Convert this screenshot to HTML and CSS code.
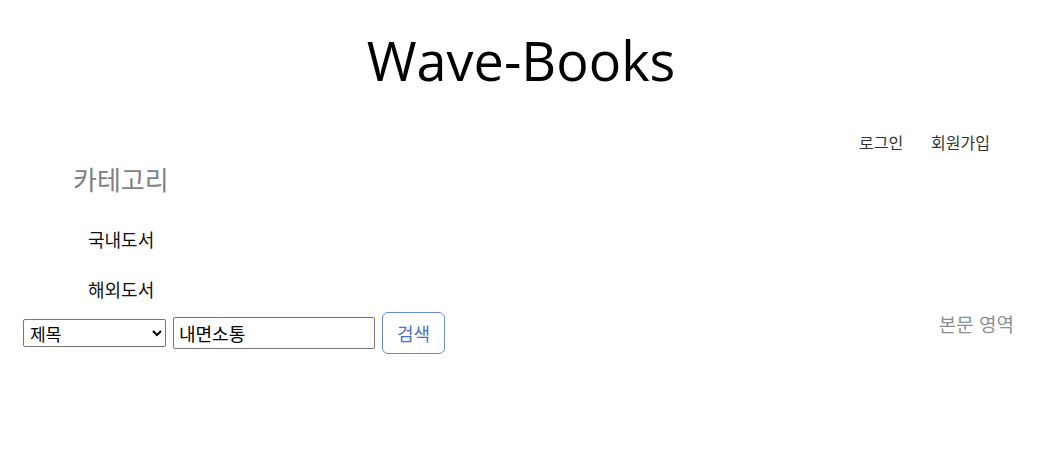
FILE: index.html
```html
<!DOCTYPE html>
<html lang="ko">
<head>
<meta charset="utf-8">
<title>Wave-Books</title>
<link rel="stylesheet" href="styles.css">
</head>
<body>
<header class="header">
  <h1 class="logo">Wave-Books</h1>
  <nav class="auth">
    <a href="#" class="auth-link">로그인</a>
    <a href="#" class="auth-link">회원가입</a>
  </nav>
</header>
<aside class="category">
  <h2 class="category-title">카테고리</h2>
  <ul class="category-list">
    <li>국내도서</li>
    <li>해외도서</li>
  </ul>
</aside>
<section class="main-row">
  <form class="search">
    <select class="search-select">
      <option>제목</option>
    </select>
    <input class="search-input" type="text" value="내면소통">
    <button class="search-btn" type="button">검색</button>
  </form>
  <div class="content">본문 영역</div>
</section>
</body>
</html>
```
FILE: styles.css
```css
html, body {
  margin: 0;
  padding: 0;
  background: #fff;
}
body {
  font-family: "Open Sans", "Noto Sans CJK KR", sans-serif;
  color: #212529;
}
.header {
  display: flex;
  flex-direction: column;
}
.logo {
  margin: 22px 0 0;
  text-align: center;
  font-weight: 400;
  font-size: 54px;
  line-height: 76px;
  color: #000;
}
.auth {
  display: flex;
  justify-content: flex-end;
  gap: 28px;
  padding-right: 52px;
  margin-top: 33px;
}
.auth-link {
  font-family: "Noto Sans CJK KR", sans-serif;
  font-size: 16px;
  color: #333;
  text-decoration: none;
  line-height: 22px;
}
.category {
  padding-left: 73px;
}
.category-title {
  margin: 9px 0 0;
  font-family: "Noto Sans CJK KR", sans-serif;
  font-weight: 400;
  font-size: 26px;
  line-height: 34px;
  color: #7f7f84;
}
.category-list {
  list-style: none;
  margin: 31px 0 0;
  padding: 0 0 0 15px;
  font-family: "Noto Sans CJK KR", sans-serif;
  font-size: 18px;
  line-height: 24px;
  color: #111;
  display: flex;
  flex-direction: column;
  gap: 26px;
}
.main-row {
  display: flex;
  justify-content: space-between;
  align-items: flex-start;
  padding: 11px 28px 0 23px;
}
.search {
  display: flex;
  align-items: center;
  gap: 7px;
}
.search-select {
  width: 143px;
  height: 28px;
  font-family: "Noto Sans CJK KR", sans-serif;
  font-size: 17px;
  border: 1px solid #767676;
  border-radius: 2px;
  background: #fff;
  color: #000;
  padding: 0 2px;
}
.search-input {
  width: 202px;
  height: 32px;
  box-sizing: border-box;
  font-family: "Noto Sans CJK KR", sans-serif;
  font-size: 18px;
  border: 1px solid #767676;
  border-radius: 2px;
  padding: 0 5px;
  color: #000;
}
.search-btn {
  width: 63px;
  height: 42px;
  font-family: "Noto Sans CJK KR", sans-serif;
  font-size: 18px;
  color: #4a6fcf;
  background: #fff;
  border: 1px solid #6a86d6;
  border-radius: 6px;
}
.content {
  font-family: "Noto Sans CJK KR", sans-serif;
  font-size: 19px;
  line-height: 24px;
  color: #8a8f98;
  margin-top: 0;
}
```
